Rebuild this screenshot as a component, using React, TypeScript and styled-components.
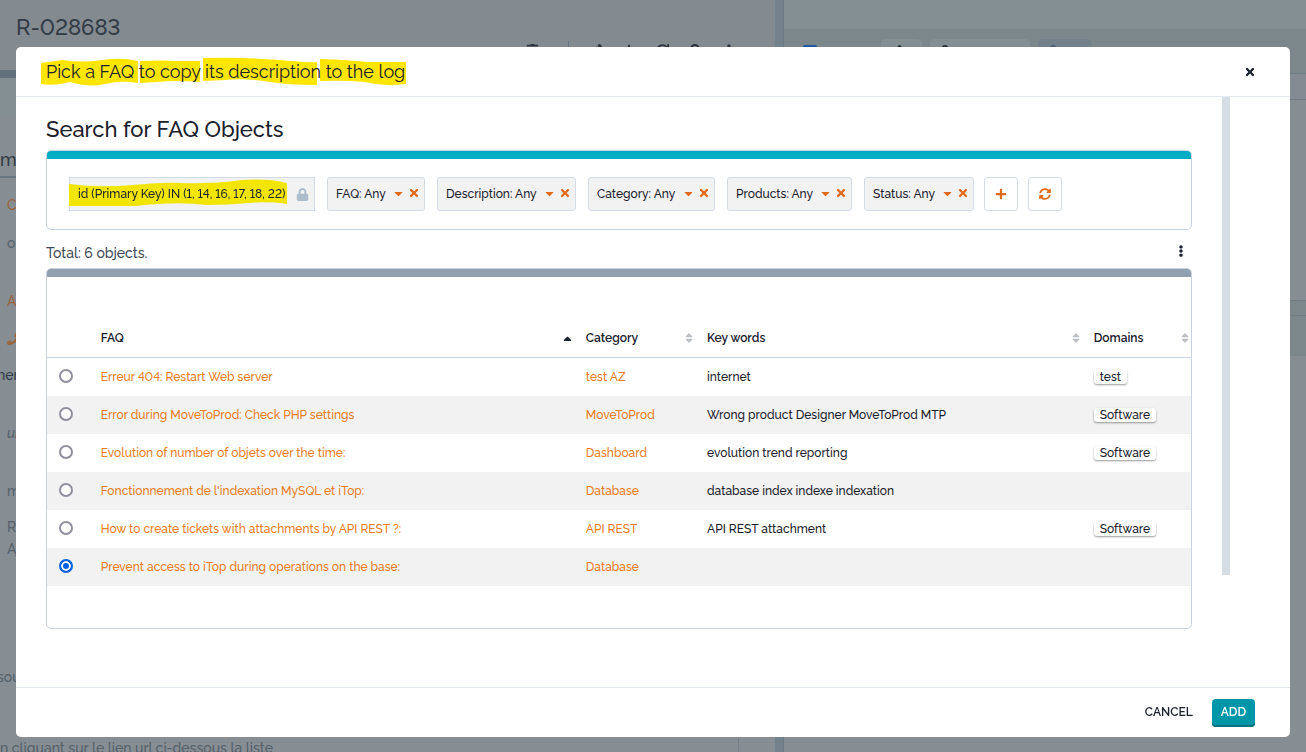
import React from "react";
import styled, { createGlobalStyle, css } from "styled-components";
import { FaTimes, FaCaretDown, FaCaretUp, FaLock, FaPlus, FaSyncAlt, FaEllipsisV, FaPhone, FaTrash, FaPen, FaRedo, FaSearch, FaSort } from "react-icons/fa";

const Global = createGlobalStyle`
  * { box-sizing: border-box; }
  html, body, #root { height: 100%; }
  body { margin: 0; overflow: hidden; background: #868e94; color: #1a202c; font-family: Raleway, Lato, sans-serif; font-size: 12px; font-weight: 500; font-variant-numeric: lining-nums; }
  button, input { font: inherit; }
`;

const Page = styled.div`
  display: flex;
  min-height: 100vh;
`;

const Details = styled.main`
  flex: 0 0 59.35%;
  height: 100vh;
  overflow: hidden;
  background: #868e94;
  color: #55616b;
`;

const DetailsHead = styled.header`
  display: flex;
  flex-direction: column;
  height: 70px;
  padding: 13px 40px 0 16px;
  background: #838a90;
`;

const TicketRef = styled.h2`
  margin: 0;
  font-size: 22px;
  line-height: 28px;
  font-weight: 500;
  color: #323c47;
`;

const Tools = styled.div`
  display: flex;
  justify-content: flex-end;
  align-items: center;
  gap: 21px;
  color: #2d3640;
`;

const ToolDivider = styled.span`
  width: 1px;
  height: 18px;
  margin-left: 8px;
  background: #66757f;
`;

const Band = styled.div<{ $h: number; $bg: string }>`
  height: ${(p) => p.$h}px;
  background: ${(p) => p.$bg};
`;

const SectionTitle = styled.h3`
  margin: 0;
  height: 64px;
  padding-top: 35px;
  border-bottom: 2px solid #697680;
  font-size: 18px;
  line-height: 22px;
  font-weight: 500;
  color: #323c47;
  white-space: nowrap;
`;

const Line = styled.p<{ $h: number; $tone?: string; $indent?: boolean; $italic?: boolean; $boxed?: boolean; $bleed?: boolean }>`
  margin: 0;
  display: flex;
  align-items: center;
  height: ${(p) => p.$h}px;
  padding-left: ${(p) => (p.$indent ? 7 : 0)}px;
  font-size: 14px;
  color: ${(p) => p.$tone ?? "#55616b"};
  font-style: ${(p) => (p.$italic ? "italic" : "normal")};
  white-space: nowrap;
  ${(p) => p.$boxed && css`margin-right: 36px; border-right: 1px solid #74818a;`}
  ${(p) => p.$bleed && css`margin-left: -3px;`}
`;

const Gutter = styled.div`
  flex: 0 0 8px;
  background: #74828b;
`;

const Activity = styled.aside`
  flex: 1;
  border-left: 1px solid #6d7b84;
`;

const ActivityTop = styled.div`
  height: 29px;
  background: #848f93;
`;

const ActivityTabs = styled.div`
  display: flex;
  align-items: flex-start;
  gap: 8px;
  height: 44px;
  padding: 10px 0 0 19px;
  background: #7c878c;
`;

const Marker = styled.span`
  width: 14px;
  height: 14px;
  margin: 6px 56px 0 0;
  border-radius: 2px;
  background: #1f59a4;
`;

const Tab = styled.span<{ $w: number; $muted?: boolean }>`
  width: ${(p) => p.$w}px;
  height: 30px;
  padding: 6px 9px;
  border-radius: 5px;
  background: ${(p) => (p.$muted ? "#74818a" : "#848f93")};
  color: ${(p) => (p.$muted ? "#4b6075" : "#263340")};
`;

const ActivityRow = styled.div<{ $h: number; $bg: string }>`
  height: ${(p) => p.$h}px;
  border-top: 1px solid #6f7c83;
  background: ${(p) => p.$bg};
`;

const Overlay = styled.div`
  position: fixed;
  inset: 0;
  display: flex;
  padding: 47px 16px 15px;
`;

const Dialog = styled.section`
  flex: 1;
  display: flex;
  flex-direction: column;
  border-radius: 5px;
  overflow: hidden;
  background: #fff;
`;

const DialogHead = styled.header`
  display: flex;
  align-items: center;
  justify-content: space-between;
  height: 50px;
  padding: 0 30px;
  border-bottom: 1px solid #e2e8f0;
`;

const Marked = styled.span`
  position: relative;
  isolation: isolate;
  white-space: nowrap;
`;

const Ink = styled.svg<{ $edge: "title" | "chip" }>`
  position: absolute;
  z-index: -1;
  ${(p) =>
    p.$edge === "title"
      ? css`top: -4px; left: -6px; width: 367px; height: 30px;`
      : css`top: -8px; left: -10px; width: 221px; height: 28px;`}
`;

const DialogTitle = styled.h1`
  margin: 0;
  font-size: 18px;
  line-height: 22px;
  font-weight: 400;
`;

const IconButton = styled.button`
  display: grid;
  place-items: center;
  width: 20px;
  height: 20px;
  padding: 0;
  border: 0;
  background: none;
  color: #1a202c;
`;

const DialogBody = styled.div`
  flex: 1;
  display: flex;
  align-items: flex-start;
  min-height: 0;
  padding: 0 60px 0 30px;
`;

const Content = styled.div`
  flex: 1;
  min-width: 0;
  padding: 18px 30px 0 0;
`;

const ScrollThumb = styled.div`
  width: 8px;
  height: 81%;
  background: #d5dde5;
`;

const Heading = styled.h2`
  margin: 0 0 6px;
  font-size: 22px;
  line-height: 29px;
  font-weight: 500;
`;

const Panel = styled.section<{ $accent: string }>`
  border: 1px solid #c9d3dd;
  border-radius: 5px;
  overflow: hidden;

  &::before {
    content: "";
    display: block;
    height: 8px;
    background: ${(p) => p.$accent};
  }
`;

const Criteria = styled.form`
  display: flex;
  flex-wrap: wrap;
  gap: 12px;
  padding: 18px 22px;
`;

const Chip = styled.div<{ $locked?: boolean; $w: number }>`
  display: flex;
  align-items: center;
  justify-content: space-between;
  width: ${(p) => p.$w}px;
  height: 34px;
  padding: 0 5px 0 8px;
  border: 1px solid #d3dce5;
  border-radius: ${(p) => (p.$locked ? 0 : 3)}px;
  background: #f2f2f2;
  white-space: nowrap;

  > svg { flex: none; color: #aebdcc; }
`;

const ChipActions = styled.span`
  display: flex;
  gap: 6px;
  padding: 0 1px 2px 0;
`;

const ChipAction = styled.button`
  display: grid;
  place-items: center;
  width: 10px;
  height: 14px;
  padding: 0;
  border: 0;
  background: none;
  color: #e0691b;
`;

const CriteriaTools = styled.div`
  display: flex;
  gap: 10px;
  margin-left: -2px;
`;

const SquareButton = styled.button`
  display: grid;
  place-items: center;
  width: 34px;
  height: 34px;
  padding: 0;
  border: 1px solid #d3dce5;
  border-radius: 3px;
  background: #fff;
  color: #e0691b;
`;

const Summary = styled.div`
  display: flex;
  align-items: flex-start;
  justify-content: space-between;
  height: 38px;
  padding: 11px 1px 0 0;
  font-size: 14px;
  line-height: 24px;
  color: #3f4a59;
`;

const TableArea = styled.div`
  padding: 42px 0;
`;

const Table = styled.table`
  width: 100%;
  table-layout: fixed;
  border-collapse: separate;
  border-spacing: 0;

  th, td { padding: 0 0 0 8px; text-align: left; white-space: nowrap; }
  th { height: 39px; border-bottom: 1px solid #c9d3dd; font-weight: 600; }
  td { height: 38px; }
  tbody tr:nth-child(even) { background: #f2f2f2; }
`;

const HeadCell = styled.span<{ $last?: boolean }>`
  display: flex;
  align-items: center;
  justify-content: space-between;
  padding-right: ${(p) => (p.$last ? 0 : 4)}px;

  svg { color: #bcbfc3; }
  svg[data-active] { color: #1a202c; }
`;

const Radio = styled.input`
  display: block;
  appearance: none;
  width: 14px;
  height: 14px;
  margin: 0 0 2px 4px;
  border: 2px solid #8f8f9d;
  border-radius: 50%;
  background: #fff;

  &:checked {
    border-color: #0061e0;
    background: #0061e0;
    box-shadow: inset 0 0 0 2px #fff;
  }
`;

const TextLink = styled.a`
  color: #ea7d1e;
  text-decoration: none;
`;

const Tag = styled.span`
  display: inline-block;
  padding: 0 6px;
  border-radius: 3px;
  line-height: 14px;
  background: #fff;
  box-shadow: 0 1px 2px rgba(0, 0, 0, 0.4);
`;

const DialogFoot = styled.footer`
  display: flex;
  align-items: center;
  justify-content: flex-end;
  gap: 10px;
  height: 50px;
  padding: 0 35px;
  border-top: 1px solid #e2e8f0;
`;

const FootButton = styled.button<{ $primary?: boolean }>`
  height: 28px;
  padding: 0 9px 2px;
  border: 0;
  border-radius: 4px;
  font-weight: 600;
  color: #1a202c;
  background: none;
  ${(p) =>
    p.$primary &&
    css`background: #0096a9; color: #fff; box-shadow: inset 0 -2px 0 #006f7d;`}
`;

const criteria = [
  { label: "FAQ", width: 98 },
  { label: "Description", width: 139 },
  { label: "Category", width: 127 },
  { label: "Products", width: 125 },
  { label: "Status", width: 110 },
];

const rows = [
  { faq: "Erreur 404: Restart Web server", category: "test AZ", words: "internet", domain: "test" },
  { faq: "Error during MoveToProd: Check PHP settings", category: "MoveToProd", words: "Wrong product Designer MoveToProd MTP", domain: "Software" },
  { faq: "Evolution of number of objets over the time:", category: "Dashboard", words: "evolution trend reporting", domain: "Software" },
  { faq: "Fonctionnement de l'indexation MySQL et iTop:", category: "Database", words: "database index indexe indexation", domain: "" },
  { faq: "How to create tickets with attachments by API REST ?:", category: "API REST", words: "API REST attachment", domain: "Software" },
  { faq: "Prevent access to iTop during operations on the base:", category: "Database", words: "", domain: "" },
];

function Background() {
  return (
    <Page aria-hidden="true">
      <Details>
        <DetailsHead>
          <TicketRef>R-028683</TicketRef>
          <Tools>
            <FaTrash size={13} />
            <ToolDivider />
            <FaPen size={12} />
            <FaPlus size={12} />
            <FaRedo size={13} />
            <FaSearch size={12} />
            <FaEllipsisV size={12} />
          </Tools>
        </DetailsHead>
        <Band $h={8} $bg="#61707a" />
        <Band $h={36} $bg="#848f93" />
        <SectionTitle>mation</SectionTitle>
        <Band $h={8} $bg="#868e94" />
        <Line $h={38} $indent $tone="#9a653c">Client</Line>
        <Line $h={38} $indent>open</Line>
        <Band $h={1} $bg="#868e94" />
        <Line $h={76} $indent $tone="#9a653c">Agent</Line>
        <Line $h={0} $indent $tone="#9a653c"><FaPhone size={12} /></Line>
        <Line $h={72} $bleed $tone="#323c47">ner</Line>
        <Line $h={44} $indent $italic>undefined</Line>
        <Line $h={72} $indent>message</Line>
        <Line $h={0} $indent>Restart</Line>
        <Line $h={44} $indent>Ajout</Line>
        <Band $h={96} $bg="#868e94" />
        <Line $h={20} $bleed>sous</Line>
        <Band $h={51} $bg="#868e94" />
        <Line $h={20} $boxed>n cliquant sur le lien url ci-dessous la liste</Line>
      </Details>
      <Gutter />
      <Activity>
        <ActivityTop />
        <ActivityTabs>
          <Marker />
          <Tab $w={41}><FaPen size={12} /></Tab>
          <Tab $w={100}><FaLock size={12} /></Tab>
          <Tab $w={54} $muted><FaLock size={12} /></Tab>
        </ActivityTabs>
        <ActivityRow $h={26} $bg="#858b93" />
        <ActivityRow $h={201} $bg="#868e94" />
        <ActivityRow $h={15} $bg="#7c878c" />
        <ActivityRow $h={41} $bg="#7c878c" />
      </Activity>
    </Page>
  );
}

export default function App() {
  return (
    <>
      <Global />
      <Background />
      <Overlay>
        <Dialog role="dialog" aria-labelledby="dialog-title">
          <DialogHead>
            <DialogTitle id="dialog-title">
              <Marked>
                <Ink $edge="title" viewBox="0 0 367 30" preserveAspectRatio="none" fill="#ffe600" aria-hidden="true">
                  <path d="M1 6 L22 3 Q42 6 62 3 T98 4 V26 Q80 23 65 27 T30 25 Q16 29 1 27Z" />
                  <path d="M100 4 Q125 3 134 4 H160 V25 Q137 23 117 25 L100 26Z" />
                  <path d="M163 1 Q205 0 239 3 T277 5 V28 Q247 28 230 25 Q207 21 185 23 L163 24Z" />
                  <path d="M280 2 Q310 3 327 5 H366 V27 Q344 30 325 25 Q301 23 280 24Z" />
                </Ink>
                Pick a FAQ to copy its description to the log
              </Marked>
            </DialogTitle>
            <IconButton aria-label="Close"><FaTimes size={12} /></IconButton>
          </DialogHead>
          <DialogBody>
            <Content>
              <Heading>Search for FAQ Objects</Heading>
              <Panel $accent="#00adc2">
                <Criteria>
                  <Chip $locked $w={246}>
                    <Marked>
                      <Ink $edge="chip" viewBox="0 0 221 28" preserveAspectRatio="none" fill="#f2e600" aria-hidden="true">
                        <path d="M1 5 Q30 9 65 6 T112 4 Q145 5 174 1 Q199 -1 219 4 V25 Q200 22 180 24 T138 26 Q110 22 68 27 L1 27Z" />
                      </Ink>
                      id (Primary Key) IN (1, 14, 16, 17, 18, 22)
                    </Marked>
                    <FaLock size={13} />
                  </Chip>
                  {criteria.map((c) => (
                    <Chip key={c.label} $w={c.width}>
                      <span>{c.label}: Any</span>
                      <ChipActions>
                        <ChipAction type="button" aria-label={`Edit ${c.label}`}><FaCaretDown size={13} /></ChipAction>
                        <ChipAction type="button" aria-label={`Remove ${c.label}`}><FaTimes size={12} /></ChipAction>
                      </ChipActions>
                    </Chip>
                  ))}
                  <CriteriaTools>
                    <SquareButton type="button" aria-label="Add criterion"><FaPlus size={12} /></SquareButton>
                    <SquareButton type="button" aria-label="Refresh"><FaSyncAlt size={12} /></SquareButton>
                  </CriteriaTools>
                </Criteria>
              </Panel>
              <Summary>
                <span>Total: 6 objects.</span>
                <IconButton aria-label="More actions"><FaEllipsisV size={12} /></IconButton>
              </Summary>
              <Panel $accent="#929fb1">
                <TableArea>
                  <Table>
                    <colgroup>
                      <col style={{ width: "4%" }} />
                      <col style={{ width: "42.4%" }} />
                      <col style={{ width: "10.6%" }} />
                      <col style={{ width: "33.8%" }} />
                      <col />
                    </colgroup>
                    <thead>
                      <tr>
                        <th aria-label="Selection" />
                        <th><HeadCell>FAQ<FaCaretUp size={13} data-active /></HeadCell></th>
                        <th><HeadCell>Category<FaSort size={12} /></HeadCell></th>
                        <th><HeadCell>Key words<FaSort size={12} /></HeadCell></th>
                        <th><HeadCell $last>Domains<FaSort size={12} /></HeadCell></th>
                      </tr>
                    </thead>
                    <tbody>
                      {rows.map((r, i) => (
                        <tr key={r.faq}>
                          <td><Radio type="radio" name="faq" aria-label={r.faq} defaultChecked={i === 5} /></td>
                          <td><TextLink href="#faq">{r.faq}</TextLink></td>
                          <td><TextLink href="#category">{r.category}</TextLink></td>
                          <td>{r.words}</td>
                          <td>{r.domain && <Tag>{r.domain}</Tag>}</td>
                        </tr>
                      ))}
                    </tbody>
                  </Table>
                </TableArea>
              </Panel>
            </Content>
            <ScrollThumb />
          </DialogBody>
          <DialogFoot>
            <FootButton>CANCEL</FootButton>
            <FootButton $primary>ADD</FootButton>
          </DialogFoot>
        </Dialog>
      </Overlay>
    </>
  );
}
